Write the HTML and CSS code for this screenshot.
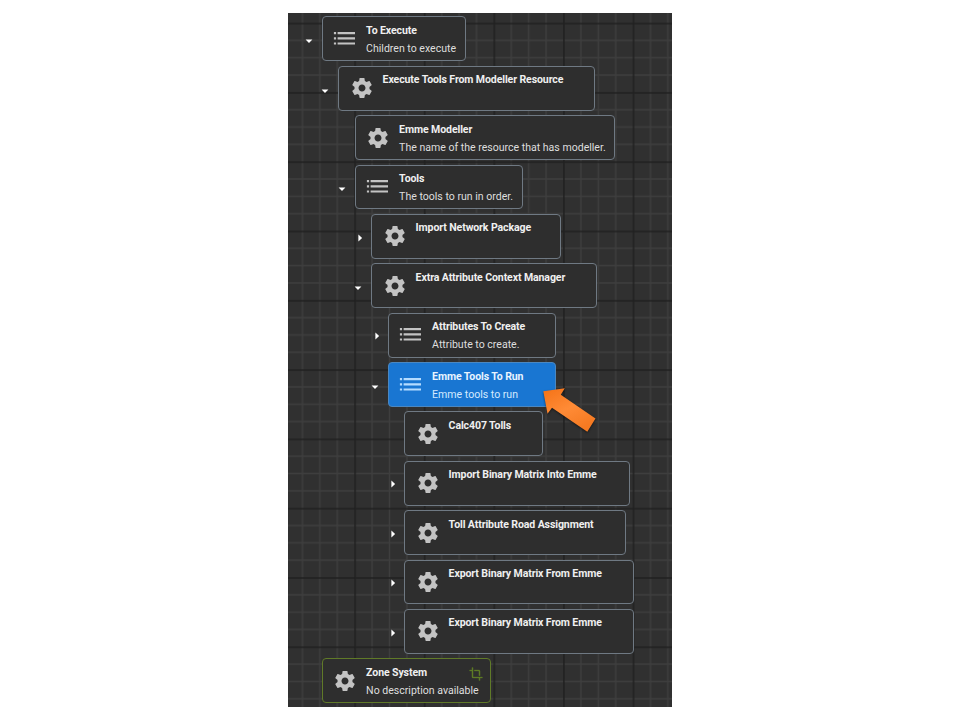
FILE: index.html
```
<!DOCTYPE html>
<html lang="en">
<head>
<meta charset="utf-8">
<title>Model System</title>
<link rel="stylesheet" href="styles.css">
</head>
<body>
<svg class="defs" width="0" height="0" aria-hidden="true">
  <symbol id="gear" viewBox="0 0 24 24"><path d="M19.43 12.98c.04-.32.07-.64.07-.98s-.03-.66-.07-.98l2.11-1.65c.19-.15.24-.42.12-.64l-2-3.46c-.12-.22-.39-.3-.61-.22l-2.49 1c-.52-.4-1.08-.73-1.69-.98l-.38-2.65C14.46 2.18 14.25 2 14 2h-4c-.25 0-.46.18-.49.42l-.38 2.65c-.61.25-1.17.59-1.69.98l-2.49-1c-.23-.09-.49 0-.61.22l-2 3.46c-.13.22-.07.49.12.64l2.11 1.65c-.04.32-.07.65-.07.98s.03.66.07.98l-2.11 1.65c-.19.15-.24.42-.12.64l2 3.46c.12.22.39.3.61.22l2.49-1c.52.4 1.08.73 1.69.98l.38 2.65c.03.24.24.42.49.42h4c.25 0 .46-.18.49-.42l.38-2.65c.61-.25 1.17-.59 1.69-.98l2.49 1c.23.09.49 0 .61-.22l2-3.46c.12-.22.07-.49-.12-.64l-2.11-1.65zM12 15.5c-1.93 0-3.5-1.57-3.5-3.5s1.57-3.5 3.5-3.5 3.5 1.57 3.5 3.5-1.57 3.5-3.5 3.5z"/></symbol>
  <symbol id="list" viewBox="0 0 24 24"><path d="M.9 5h2.2v2.2H.9zM.9 10.3h2.2v2.2H.9zM.9 15.4h2.2v2.2H.9zM4.6 5h17.4v2.2H4.6zM4.6 10.3h17.4v2.2H4.6zM4.6 15.4h17.4v2.2H4.6z"/></symbol>
  <symbol id="crop" viewBox="0 0 24 24"><path d="M17 15h2V7c0-1.1-.9-2-2-2H9v2h8v8zM7 17V1H5v4H1v2h4v10c0 1.1.9 2 2 2h10v4h2v-4h4v-2H7z"/></symbol>
  <symbol id="down" viewBox="0 0 8 8"><path d="M.6 2.4h6.8L4 5.9z"/></symbol>
  <symbol id="right" viewBox="0 0 8 8"><path d="M2.4.6v6.8L6.1 4z"/></symbol>
</svg>
<main class="canvas">
  <svg class="grid" width="384" height="694" aria-hidden="true">
    <defs>
      <pattern id="cells" x="66.2" y="9.6" width="69.6" height="69.3" patternUnits="userSpaceOnUse">
        <path class="minor" d="M17.9 0V69.3M35.3 0V69.3M52.7 0V69.3M0 17.8H69.6M0 35.1H69.6M0 52.4H69.6"/>
        <path class="major" d="M.9 0V69.3M0 .9H69.6"/>
      </pattern>
    </defs>
    <rect width="384" height="694" fill="url(#cells)"/>
  </svg>
  <ul class="tree">
    <li>
      <div class="row"><svg class="toggle"><use href="#down"/></svg><div class="card w144"><svg class="icon"><use href="#list"/></svg><div class="text"><b>To Execute</b><span>Children to execute</span></div></div></div>
      <ul>
        <li>
          <div class="row"><svg class="toggle"><use href="#down"/></svg><div class="card w257"><svg class="icon"><use href="#gear"/></svg><div class="text"><b>Execute Tools From Modeller Resource</b></div></div></div>
          <ul>
            <li><div class="row"><span class="toggle"></span><div class="card w260"><svg class="icon"><use href="#gear"/></svg><div class="text"><b>Emme Modeller</b><span>The name of the resource that has modeller.</span></div></div></div></li>
            <li>
              <div class="row"><svg class="toggle"><use href="#down"/></svg><div class="card w168"><svg class="icon"><use href="#list"/></svg><div class="text"><b>Tools</b><span>The tools to run in order.</span></div></div></div>
              <ul>
                <li><div class="row"><svg class="toggle closed"><use href="#right"/></svg><div class="card w190"><svg class="icon"><use href="#gear"/></svg><div class="text"><b>Import Network Package</b></div></div></div></li>
                <li>
                  <div class="row"><svg class="toggle"><use href="#down"/></svg><div class="card w225"><svg class="icon"><use href="#gear"/></svg><div class="text"><b>Extra Attribute Context Manager</b></div></div></div>
                  <ul>
                    <li><div class="row"><svg class="toggle closed"><use href="#right"/></svg><div class="card w168"><svg class="icon"><use href="#list"/></svg><div class="text"><b>Attributes To Create</b><span>Attribute to create.</span></div></div></div></li>
                    <li>
                      <div class="row"><svg class="toggle"><use href="#down"/></svg><div class="card w168 selected"><svg class="icon"><use href="#list"/></svg><div class="text"><b>Emme Tools To Run</b><span>Emme tools to run</span></div></div></div>
                      <ul>
                        <li><div class="row"><span class="toggle"></span><div class="card w139"><svg class="icon"><use href="#gear"/></svg><div class="text"><b>Calc407 Tolls</b></div></div></div></li>
                        <li><div class="row"><svg class="toggle closed"><use href="#right"/></svg><div class="card w225"><svg class="icon"><use href="#gear"/></svg><div class="text"><b>Import Binary Matrix Into Emme</b></div></div></div></li>
                        <li><div class="row"><svg class="toggle closed"><use href="#right"/></svg><div class="card w221"><svg class="icon"><use href="#gear"/></svg><div class="text"><b>Toll Attribute Road Assignment</b></div></div></div></li>
                        <li><div class="row"><svg class="toggle closed"><use href="#right"/></svg><div class="card w229"><svg class="icon"><use href="#gear"/></svg><div class="text"><b>Export Binary Matrix From Emme</b></div></div></div></li>
                        <li><div class="row"><svg class="toggle closed"><use href="#right"/></svg><div class="card w229"><svg class="icon"><use href="#gear"/></svg><div class="text"><b>Export Binary Matrix From Emme</b></div></div></div></li>
                      </ul>
                    </li>
                  </ul>
                </li>
              </ul>
            </li>
          </ul>
        </li>
      </ul>
    </li>
    <li><div class="row"><span class="toggle"></span><div class="card w169 zone"><svg class="icon"><use href="#gear"/></svg><div class="text"><b>Zone System</b><span>No description available</span></div><svg class="badge"><use href="#crop"/></svg></div></div></li>
  </ul>
  <svg class="pointer" viewBox="0 0 60 52" aria-hidden="true">
    <defs><linearGradient id="flame" x1="0" y1="0" x2=".6" y2="1"><stop offset="0" stop-color="#f47216"/><stop offset=".55" stop-color="#ff8b36"/><stop offset="1" stop-color="#f57a22"/></linearGradient></defs>
    <path fill="url(#flame)" d="M3.3 5.3L24.8 2.3L20.8 8.8L55.5 32.6L47.3 45.8L12 21.8L7.5 27.8Z"/>
  </svg>
</main>
</body>
</html>
```
FILE: styles.css
```
body {
  margin: 0;
  background: #fff;
  font-family: Roboto, "Liberation Sans", sans-serif;
}
.defs { display: block; }
.canvas {
  position: relative;
  width: 384px;
  height: 694px;
  margin: 13px 0 0 288px;
  background: #303030;
  overflow: hidden;
}
.grid { position: absolute; inset: 0; }
.minor { stroke: #3e3e3e; stroke-width: 1.4; }
.major { stroke: #202020; stroke-width: 1.5; }
.tree {
  position: relative;
  padding: 3.4px 0 0 13.95px;
}
ul { margin: 0; padding: 0; list-style: none; }
ul ul { padding-left: 16.5px; }
.row {
  display: flex;
  align-items: flex-start;
  height: 49.38px;
}
.toggle {
  flex: none;
  width: 8px;
  height: 8px;
  margin: 20.9px 9.2px 0 2.8px;
  fill: #fff;
}
.closed { margin: 19.7px 7.3px 0 4.7px; }
.card {
  display: flex;
  box-sizing: border-box;
  height: 44.9px;
  border: 1px solid #6f7983;
  border-radius: 4px;
  background: #2e2e2e;
  color: #f0f0f0;
}
.icon {
  flex: none;
  width: 24px;
  height: 24px;
  margin: 9.5px 8.9px 0 10.3px;
  fill: #c3c3c3;
}
.text {
  display: flex;
  flex-direction: column;
  padding-top: 4.5px;
  font-size: 10.56px;
  line-height: 18px;
  white-space: nowrap;
}
.text b { font-weight: 700; letter-spacing: -.11px; }
.text span { color: #dedede; }
.selected { background: #1976d2; border-color: #4b87c0; }
.selected .icon { fill: #b5dcff; }
.selected .text span { color: #d4eaff; }
.selected .text b { color: #e8f4ff; }
.zone { position: relative; border-color: #607a28; }
.badge {
  position: absolute;
  top: 7.5px;
  right: 7px;
  width: 14px;
  height: 14px;
  fill: #5e7b27;
  stroke: #5e7b27;
  stroke-width: .5px;
}
.pointer {
  position: absolute;
  left: 252px;
  top: 373px;
  width: 60px;
  height: 52px;
  filter: drop-shadow(0 1px 1px rgba(0, 0, 0, .5));
}
.w139 { width: 139px; }
.w144 { width: 144.3px; }
.w168 { width: 168.5px; }
.w169 { width: 169px; }
.w190 { width: 190px; }
.w221 { width: 221.5px; }
.w225 { width: 225.3px; }
.w229 { width: 229.2px; }
.w257 { width: 257px; }
.w260 { width: 260.5px; }
```
